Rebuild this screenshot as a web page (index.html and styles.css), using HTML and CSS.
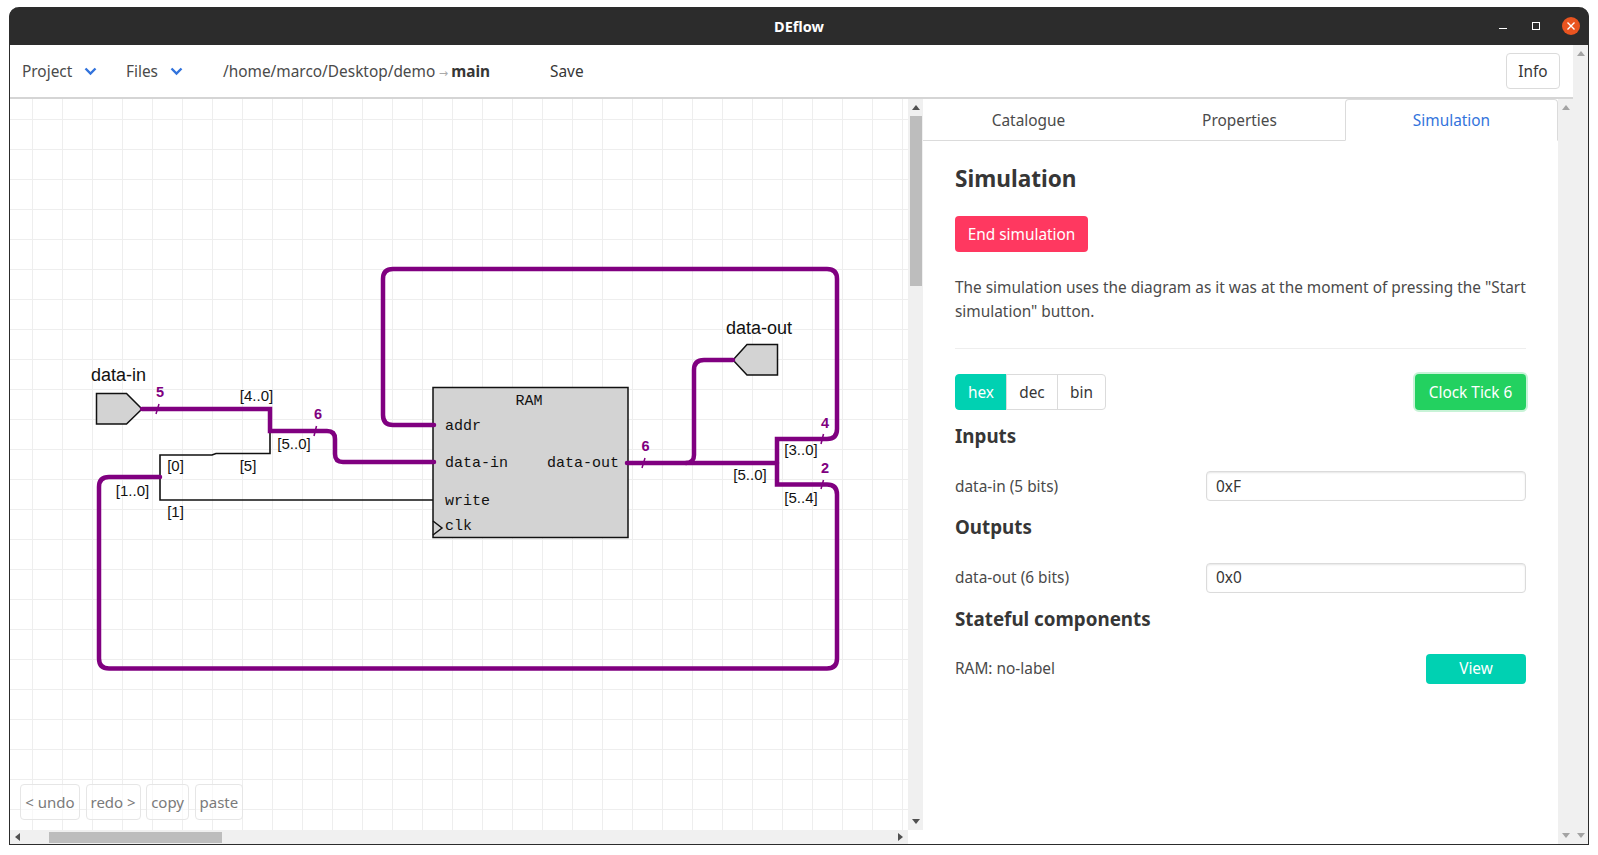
FILE: index.html
```html
<!DOCTYPE html>
<html lang="en">
<head>
    <meta charset="UTF-8">
    <meta name="viewport" content="width=device-width, initial-scale=1.0">
    <title>DEflow</title>
    <link rel="stylesheet" href="styles.css">
</head>
<body>
    <div class="window">
        <div class="titlebar">
            <span class="titlebar-name">DEflow</span>
            <div class="window-controls">
                <span class="win-min"></span>
                <span class="win-max"></span>
                <svg class="win-close" width="18" height="18" viewBox="0 0 18 18">
                    <circle cx="9" cy="9" r="9" fill="#e95420"/>
                    <path d="M5.5 5.5L12.5 12.5M12.5 5.5L5.5 12.5" stroke="#fff" stroke-width="1.4"/>
                </svg>
            </div>
        </div>

        <div class="app">
            <div class="app-main">
                <div class="toolbar">
                    <div class="menu menu-project">Project
                        <svg class="chevron" width="15" height="10" viewBox="0 0 14 10"><path d="M2 2.5L7 7.5L12 2.5" fill="none" stroke="#3273dc" stroke-width="2.4"/></svg>
                    </div>
                    <div class="menu menu-files">Files
                        <svg class="chevron" width="15" height="10" viewBox="0 0 14 10"><path d="M2 2.5L7 7.5L12 2.5" fill="none" stroke="#3273dc" stroke-width="2.4"/></svg>
                    </div>
                    <div class="path">/home/marco/Desktop/demo<span class="path-arrow">→</span><b>main</b></div>
                    <div class="save">Save</div>
                    <button class="btn btn-info">Info</button>
                </div>

                <div class="workspace">
                    <div class="canvas-area">
                        <div class="canvas-row">
                            <div class="canvas">
                                <!-- Diagram, viewBox uses window coordinates -->
                                <svg class="diagram" width="898" height="731" viewBox="10 99 898 731">
                                    <g class="thin">
                                        <path d="M270 431V453.500H216L212 455H160V500H433"/>
                                    </g>
                                    <path class="shape" d="M96.500 393.500H126.500L142 409L126.500 424H96.500Z"/>
                                    <path class="shape" d="M733 360L747 344.500H777.500V375H747Z"/>
                                    <rect class="block" x="433" y="387.500" width="195" height="150"/>
                                    <path class="clk" d="M433 521L442 528L433 535"/>
                                    <g class="wire">
                                        <path d="M142 409H270V431H327Q335 431 335 439V454Q335 462 343 462H434"/>
                                        <path d="M434 425H393Q383 425 383 415V279Q383 269 393 269H827Q837 269 837 279V429Q837 439 827 439H777V484.500H827Q837 484.500 837 494.500V658.500Q837 668.500 827 668.500H109Q99 668.500 99 658.500V487Q99 477 109 477H160"/>
                                        <path d="M627 463H777"/>
                                        <path d="M686 463Q694 463 694 455V370Q694 360 704 360H733"/>
                                    </g>
                                    <g class="tick">
                                        <line x1="159" y1="404" x2="156" y2="414"/>
                                        <line x1="316.500" y1="426" x2="314" y2="436"/>
                                        <line x1="645" y1="458" x2="642" y2="468"/>
                                        <line x1="823.500" y1="434" x2="821" y2="444"/>
                                        <line x1="823.500" y1="480" x2="821" y2="489"/>
                                    </g>

                                    <text class="io-label" x="118.500" y="381" text-anchor="middle">data-in</text>
                                    <text class="io-label" x="759" y="334" text-anchor="middle">data-out</text>

                                    <text class="port" x="529" y="405" text-anchor="middle">RAM</text>
                                    <text class="port" x="445" y="430">addr</text>
                                    <text class="port" x="445" y="467">data-in</text>
                                    <text class="port" x="445" y="505">write</text>
                                    <text class="port" x="445" y="530">clk</text>
                                    <text class="port" x="619" y="467" text-anchor="end">data-out</text>

                                    <text class="bits" x="160" y="397" text-anchor="middle">5</text>
                                    <text class="bits" x="318" y="419" text-anchor="middle">6</text>
                                    <text class="bits" x="645.500" y="451" text-anchor="middle">6</text>
                                    <text class="bits" x="825" y="428" text-anchor="middle">4</text>
                                    <text class="bits" x="825" y="473" text-anchor="middle">2</text>

                                    <text class="range" x="256.500" y="401" text-anchor="middle">[4..0]</text>
                                    <text class="range" x="294" y="449" text-anchor="middle">[5..0]</text>
                                    <text class="range" x="175.500" y="471" text-anchor="middle">[0]</text>
                                    <text class="range" x="248" y="471" text-anchor="middle">[5]</text>
                                    <text class="range" x="132.500" y="496" text-anchor="middle">[1..0]</text>
                                    <text class="range" x="175.500" y="517" text-anchor="middle">[1]</text>
                                    <text class="range" x="801" y="455" text-anchor="middle">[3..0]</text>
                                    <text class="range" x="750" y="480" text-anchor="middle">[5..0]</text>
                                    <text class="range" x="801" y="503" text-anchor="middle">[5..4]</text>
                                </svg>
                                <div class="edit-buttons">
                                    <button class="btn-edit btn-undo">&lt; undo</button>
                                    <button class="btn-edit">redo &gt;</button>
                                    <button class="btn-edit">copy</button>
                                    <button class="btn-edit">paste</button>
                                </div>
                            </div>
                            <div class="scroll-v scroll-canvas">
                                <i class="arrow-up dark"></i>
                                <div class="thumb-v"></div>
                                <i class="arrow-down dark"></i>
                            </div>
                        </div>
                        <div class="scroll-h">
                            <i class="arrow-left"></i>
                            <div class="thumb-h"></div>
                            <i class="arrow-right"></i>
                        </div>
                    </div>

                    <div class="panel">
                        <div class="tabs">
                            <div class="tab">Catalogue</div>
                            <div class="tab">Properties</div>
                            <div class="tab tab-active">Simulation</div>
                        </div>
                        <div class="panel-body">
                            <h1 class="panel-title">Simulation</h1>
                            <button class="btn btn-danger">End simulation</button>
                            <p class="panel-text">The simulation uses the diagram as it was at the moment of pressing the "Start simulation" button.</p>
                            <hr class="divider">
                            <div class="sim-controls">
                                <div class="radix">
                                    <div class="radix-item radix-on">hex</div>
                                    <div class="radix-item">dec</div>
                                    <div class="radix-item">bin</div>
                                </div>
                                <button class="btn btn-clock">Clock Tick 6</button>
                            </div>
                            <h2 class="section-title">Inputs</h2>
                            <div class="field">
                                <span>data-in (5 bits)</span>
                                <input class="field-input" type="text" value="0xF">
                            </div>
                            <h2 class="section-title">Outputs</h2>
                            <div class="field">
                                <span>data-out (6 bits)</span>
                                <input class="field-input" type="text" value="0x0">
                            </div>
                            <h2 class="section-title">Stateful components</h2>
                            <div class="field">
                                <span>RAM: no-label</span>
                                <button class="btn btn-view">View</button>
                            </div>
                        </div>
                    </div>
                    <div class="scroll-v scroll-panel">
                        <i class="arrow-up"></i>
                        <i class="arrow-down"></i>
                    </div>
                </div>
            </div>
            <div class="scroll-v scroll-page">
                <i class="arrow-up"></i>
                <i class="arrow-down"></i>
            </div>
        </div>
    </div>
</body>
</html>
```
FILE: styles.css
```css
html, body {
    margin: 0;
    height: 100%;
    overflow: hidden;
    background-color: white;
}

body {
    font-family: "Noto Sans", sans-serif;
    font-size: 15.4px;
    color: #4a4a4a;
}

.window {
    box-sizing: border-box;
    width: 1580px;
    height: 838px;
    margin: 7px 0 0 9px;
    display: flex;
    flex-direction: column;
    border: 1px solid #2c2c2c;
    border-top: 0;
    border-radius: 10px 10px 0 0;
}

.titlebar {
    height: 38px;
    flex: none;
    display: flex;
    align-items: center;
    justify-content: center;
    position: relative;
    margin: 0 -1px;
    background-color: #2c2c2c;
    border-radius: 10px 10px 0 0;
}

.titlebar-name {
    color: white;
    font-size: 14.5px;
    font-weight: 700;
}

.window-controls {
    position: absolute;
    right: 9px;
    top: 10px;
    display: flex;
    align-items: center;
}

.win-min {
    width: 8px;
    height: 1px;
    margin-top: 5px;
    background-color: white;
}

.win-max {
    box-sizing: border-box;
    width: 8px;
    height: 8px;
    margin-left: 25px;
    border: 1px solid white;
}

.win-close {
    margin-left: 22px;
}

.app {
    flex: 1;
    min-height: 0;
    display: flex;
}

.app-main {
    flex: 1;
    min-width: 0;
    display: flex;
    flex-direction: column;
}

/* toolbar */
.toolbar {
    box-sizing: border-box;
    height: 54px;
    flex: none;
    display: flex;
    align-items: center;
    padding: 0 13px 0 12px;
    border-bottom: 2px solid #d5d5d5;
}

.menu {
    display: flex;
    align-items: center;
}

.chevron {
    margin-left: 11px;
}

.menu-project {
    width: 104px;
}

.menu-files {
    width: 97px;
}

.path {
    width: 327px;
}

.path-arrow {
    display: inline-block;
    width: 16px;
    font-family: "DejaVu Sans", sans-serif;
    font-size: 11px;
    text-align: center;
    color: #aaa;
}

.path b {
    color: #363636;
}

.save {
    flex: 1;
    color: #363636;
}

.btn {
    box-sizing: border-box;
    font-family: inherit;
    font-size: 15.4px;
    border: 1px solid #dbdbdb;
    border-radius: 4px;
    background-color: white;
    color: #363636;
    padding: 0;
}

.btn-info {
    width: 54px;
    height: 36px;
}

/* canvas */
.workspace {
    flex: 1;
    min-height: 0;
    display: flex;
}

.canvas-area {
    width: 913px;
    flex: none;
    display: flex;
    flex-direction: column;
}

.canvas-row {
    flex: 1;
    min-height: 0;
    display: flex;
}

.canvas {
    flex: 1;
    position: relative;
    overflow: hidden;
    background-color: white;
    background-image:
        linear-gradient(to right, #eeeeee 1.5px, transparent 1.5px),
        linear-gradient(to bottom, #eeeeee 1.5px, transparent 1.5px);
    background-size: 30px 30px;
    background-position: 22px 20px;
}

.diagram {
    display: block;
}

.wire path {
    fill: none;
    stroke: purple;
    stroke-width: 4.5;
    stroke-linecap: round;
}

.thin path {
    fill: none;
    stroke: #111;
    stroke-width: 1.6;
}

.tick line {
    stroke: purple;
    stroke-width: 1.5;
}

.shape, .block {
    fill: lightgray;
    stroke: #111;
    stroke-width: 1.5;
}

.clk {
    fill: none;
    stroke: #111;
    stroke-width: 1.5;
}

.io-label {
    font-family: "Liberation Sans", sans-serif;
    font-size: 18px;
    fill: #111;
}

.port {
    font-family: "Liberation Mono", monospace;
    font-size: 15px;
    fill: #111;
}

.bits {
    font-family: "Liberation Sans", sans-serif;
    font-size: 14.5px;
    font-weight: 700;
    fill: purple;
}

.range {
    font-family: "Liberation Sans", sans-serif;
    font-size: 15px;
    fill: #111;
}

.edit-buttons {
    position: absolute;
    left: 10px;
    bottom: 10px;
    display: flex;
    gap: 5.5px;
}

.btn-edit {
    box-sizing: border-box;
    height: 36px;
    padding: 0 4px;
    font-family: inherit;
    font-size: 15px;
    color: #7a7a7a;
    background-color: rgba(255, 255, 255, 0.6);
    border: 1px solid #e6e6e6;
    border-radius: 4px;
}

.btn-undo {
    width: 60px;
}

/* scrollbars */
.scroll-v {
    width: 15px;
    flex: none;
    display: flex;
    flex-direction: column;
    align-items: center;
    justify-content: space-between;
    box-sizing: border-box;
    padding: 6px 0;
    background-color: #f0f0f0;
}

.thumb-v {
    width: 12px;
    height: 170px;
    margin-top: 6px;
    margin-bottom: auto;
    background-color: #bdbdbd;
}

.scroll-h {
    box-sizing: border-box;
    width: 898px;
    height: 14px;
    flex: none;
    display: flex;
    align-items: center;
    padding: 0 5px 0 5px;
    background-color: #f0f0f0;
}

.thumb-h {
    width: 173px;
    height: 11px;
    margin-left: 29px;
    margin-right: auto;
    background-color: #bdbdbd;
}

.arrow-up, .arrow-down, .arrow-left, .arrow-right {
    width: 0;
    height: 0;
    display: block;
}

.arrow-up {
    border: 4px solid transparent;
    border-top: 0;
    border-bottom: 5px solid #a3a3a3;
}

.arrow-down {
    border: 4px solid transparent;
    border-bottom: 0;
    border-top: 5px solid #a3a3a3;
}

.arrow-up.dark {
    border-bottom-color: #505050;
}

.arrow-down.dark {
    border-top-color: #505050;
}

.arrow-left {
    border: 4px solid transparent;
    border-left: 0;
    border-right: 5px solid #505050;
}

.arrow-right {
    border: 4px solid transparent;
    border-right: 0;
    border-left: 5px solid #505050;
}

/* right panel */
.panel {
    flex: 1;
    min-width: 0;
    display: flex;
    flex-direction: column;
}

.tabs {
    height: 42px;
    flex: none;
    display: flex;
    box-sizing: border-box;
    border-bottom: 1px solid #dbdbdb;
}

.tab {
    flex: 1;
    display: flex;
    align-items: center;
    justify-content: center;
    padding-top: 1px;
}

.tab-active {
    color: #3273dc;
    background-color: white;
    margin-bottom: -1px;
    border: 1px solid #dbdbdb;
    border-bottom-color: white;
    border-radius: 4px 4px 0 0;
}

.panel-body {
    padding: 22px 32px 0 32px;
}

.panel-title {
    margin: 0;
    height: 32px;
    font-size: 22.6px;
    line-height: 32px;
    font-weight: 700;
    color: #363636;
}

.btn-danger {
    display: block;
    width: 133px;
    height: 36px;
    margin-top: 21px;
    background-color: #ff3860;
    border-color: transparent;
    color: white;
}

.panel-text {
    margin: 24px 0 0 0;
    line-height: 24px;
}

.divider {
    margin: 24px 0 0 0;
    border: 0;
    height: 1px;
    background-color: #eeeeee;
}

.sim-controls {
    display: flex;
    justify-content: space-between;
    margin-top: 25px;
}

.radix {
    display: flex;
}

.radix-item {
    box-sizing: border-box;
    height: 36px;
    display: flex;
    align-items: center;
    justify-content: center;
    width: 52px;
    margin-left: -1px;
    border: 1px solid #dbdbdb;
    color: #363636;
}

.radix-item:first-child {
    margin-left: 0;
    border-radius: 4px 0 0 4px;
}

.radix-item:last-child {
    width: 49px;
    border-radius: 0 4px 4px 0;
}

.radix-on {
    background-color: #00d1b2;
    border-color: #00d1b2;
    color: white;
}

.btn-clock {
    width: 111px;
    height: 36px;
    background-color: #23d160;
    border-color: transparent;
    color: white;
    box-shadow: 0 0 0 2px rgba(35, 209, 96, 0.25);
}

.section-title {
    margin: 13px 0 0 0;
    font-size: 18.8px;
    line-height: 27px;
    font-weight: 700;
    color: #363636;
}

.field {
    display: flex;
    align-items: center;
    justify-content: space-between;
    height: 30px;
    margin-top: 21.34px;
    margin-bottom: 1px;
}

.field-input {
    box-sizing: border-box;
    width: 320px;
    height: 30px;
    padding: 0 9px;
    font-family: inherit;
    font-size: 15.4px;
    color: #363636;
    border: 1px solid #dbdbdb;
    border-radius: 4px;
    box-shadow: inset 0 1px 2px rgba(10, 10, 10, 0.1);
    outline: none;
}

.btn-view {
    width: 100px;
    height: 30px;
    background-color: #00d1b2;
    border-color: transparent;
    color: white;
}
```
